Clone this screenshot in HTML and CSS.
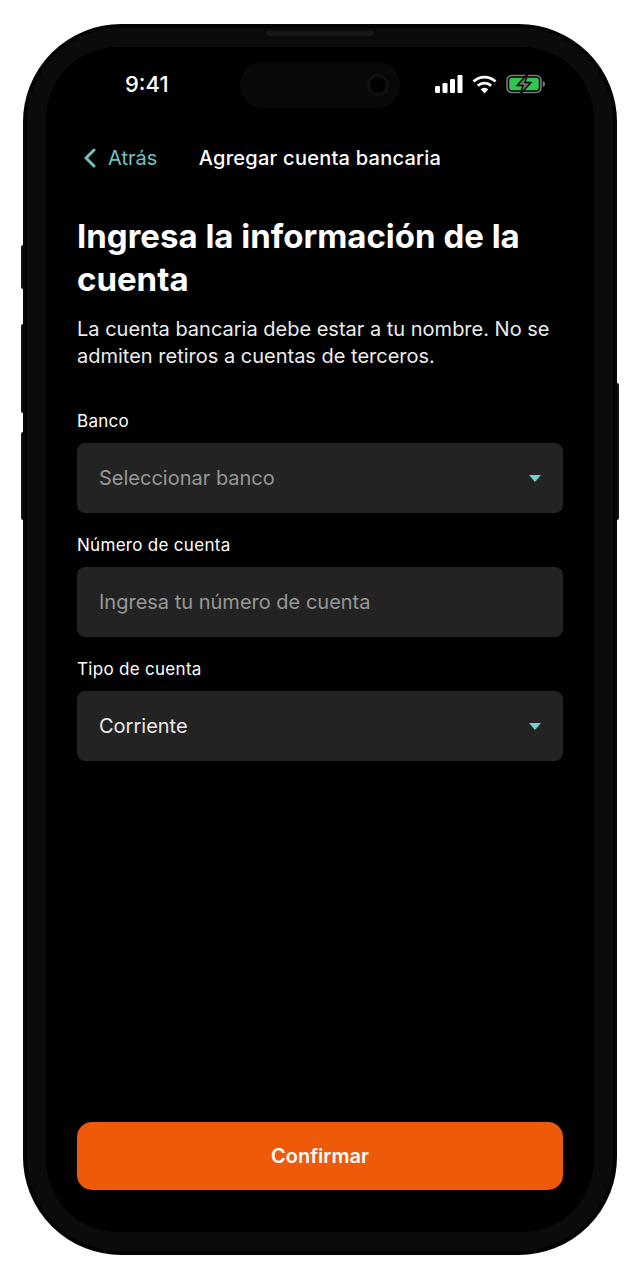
FILE: index.html
```html
<!DOCTYPE html>
<html lang="es">
<head>
    <meta charset="UTF-8">
    <meta name="viewport" content="width=device-width, initial-scale=1.0">
    <title>Agregar cuenta bancaria</title>
    <link rel="stylesheet" href="styles.css">
</head>
<body>
<div class="phone">
    <span class="side-btn btn-silent"></span>
    <span class="side-btn btn-up"></span>
    <span class="side-btn btn-down"></span>
    <span class="side-btn btn-power"></span>
    <span class="speaker"></span>

    <div class="screen">
        <div class="status-bar">
            <span class="time">9:41</span>
            <div class="island"><span class="camera"></span></div>
            <div class="status-icons">
                <svg width="28" height="18" viewBox="0 0 28 18">
                    <rect x="0" y="11" width="5" height="7" rx="1.2" fill="#fff"/>
                    <rect x="7.5" y="8" width="5" height="10" rx="1.2" fill="#fff"/>
                    <rect x="15" y="4" width="5" height="14" rx="1.2" fill="#fff"/>
                    <rect x="22.5" y="0" width="5" height="18" rx="1.2" fill="#fff"/>
                </svg>
                <svg width="25" height="19" viewBox="0 0 25 19">
                    <path d="M1.5 6.5a16 16 0 0 1 22 0" fill="none" stroke="#fff" stroke-width="2.8"/>
                    <path d="M5.8 10.8a10 10 0 0 1 13.4 0" fill="none" stroke="#fff" stroke-width="2.8"/>
                    <path d="M8.7 14.2 12.5 18.5l3.8-4.3a5.5 5.5 0 0 0-7.6 0z" fill="#fff"/>
                </svg>
                <svg width="40" height="20" viewBox="0 0 40 20">
                    <rect x="1" y="1.5" width="34" height="17" rx="5" fill="none" stroke="#7b7b7b" stroke-width="1.6"/>
                    <rect x="3.2" y="3.7" width="29.6" height="12.6" rx="3" fill="#30c750"/>
                    <path d="M36.8 7v6c1.4-.4 2.2-1.6 2.2-3s-.8-2.6-2.2-3z" fill="#7b7b7b"/>
                    <path d="M21.5 0 11 11.5h6L14.5 20 25 8.5h-6z" fill="#707070" stroke="#000" stroke-width="1.4"/>
                </svg>
            </div>
        </div>

        <div class="top-nav">
            <div class="back">
                <svg width="14" height="20" viewBox="0 0 14 20">
                    <path d="M11 2 3 10l8 8" fill="none" stroke="#6fc4c1" stroke-width="3" stroke-linecap="round" stroke-linejoin="round"/>
                </svg>
                <span>Atrás</span>
            </div>
            <span class="nav-title">Agregar cuenta bancaria</span>
        </div>

        <div class="content">
            <h1>Ingresa la información de la cuenta</h1>
            <p class="intro">La cuenta bancaria debe estar a tu nombre. No se admiten retiros a cuentas de terceros.</p>

            <div class="field">
                <label>Banco</label>
                <div class="input">
                    <span class="placeholder">Seleccionar banco</span>
                    <span class="caret"></span>
                </div>
            </div>
            <div class="field">
                <label>Número de cuenta</label>
                <div class="input">
                    <span class="placeholder">Ingresa tu número de cuenta</span>
                </div>
            </div>
            <div class="field">
                <label>Tipo de cuenta</label>
                <div class="input">
                    <span class="value">Corriente</span>
                    <span class="caret"></span>
                </div>
            </div>
        </div>

        <button class="confirm">Confirmar</button>
    </div>
</div>
</body>
</html>
```

FILE: styles.css
```css
* {
    box-sizing: border-box;
}
body {
    font-family: Inter, "Noto Sans", sans-serif;
    margin: 0;
    background-color: #ffffff;
    color: #ffffff;
}
.phone {
    position: relative;
    width: 594px;
    height: 1231px;
    margin: 24px 0 25px 23px;
    padding: 19px;
    background-color: #090b0c;
    border: 4px solid #020303;
    border-radius: 98px;
}
.side-btn {
    position: absolute;
    width: 2px;
    background-color: #151515;
}
.btn-silent {
    left: -6px;
    top: 217px;
    height: 44px;
    border-radius: 2px 0 0 2px;
}
.btn-up {
    left: -6px;
    top: 296px;
    height: 89px;
    border-radius: 2px 0 0 2px;
}
.btn-down {
    left: -6px;
    top: 404px;
    height: 88px;
    border-radius: 2px 0 0 2px;
}
.btn-power {
    right: -6px;
    top: 355px;
    height: 137px;
    border-radius: 0 2px 2px 0;
}
.speaker {
    position: absolute;
    top: 3px;
    left: 239px;
    width: 108px;
    height: 5px;
    background-color: #141617;
    border-radius: 0 0 4px 4px;
}
.screen {
    display: flex;
    flex-direction: column;
    height: 100%;
    padding: 0 31px;
    background-color: #000000;
    border-radius: 72px;
}
.status-bar {
    position: relative;
    display: flex;
    align-items: center;
    justify-content: space-between;
    height: 74px;
    padding: 0 17px 0 48px;
    flex: none;
}
.time {
    font-size: 22px;
    font-weight: 500;
}
.island {
    position: absolute;
    left: 163px;
    top: 15px;
    width: 160px;
    height: 46px;
    background-color: #070909;
    border-radius: 23px;
}
.camera {
    position: absolute;
    right: 11px;
    top: 12px;
    width: 22px;
    height: 22px;
    background-color: #000000;
    border: 3px solid #0e1011;
    border-radius: 50%;
}
.status-icons {
    display: flex;
    align-items: center;
    gap: 9px;
}
.top-nav {
    position: relative;
    display: flex;
    align-items: center;
    justify-content: center;
    height: 32px;
    margin-top: 21px;
    flex: none;
}
.back {
    position: absolute;
    left: 6px;
    top: 0;
    height: 32px;
    display: flex;
    align-items: center;
    gap: 11px;
    color: #6fc4c1;
    font-size: 20px;
}
.nav-title {
    font-size: 20px;
    font-weight: 500;
    letter-spacing: 0.25px;
}
.content {
    flex: 1;
}
h1 {
    font-size: 33px;
    font-weight: 700;
    line-height: 43px;
    margin: 41px 0 0;
}
.intro {
    font-size: 20px;
    line-height: 27px;
    margin: 15px 0 0;
    color: #ececec;
}
.field {
    margin-top: 21px;
}
.field:first-of-type {
    margin-top: 40px;
}
label {
    display: block;
    font-size: 17px;
    font-weight: 400;
    letter-spacing: 0.3px;
    line-height: 22px;
    margin-bottom: 11px;
}
.input {
    display: flex;
    align-items: center;
    justify-content: space-between;
    height: 70px;
    padding: 0 22px;
    font-size: 20px;
    background-color: #232323;
    border-radius: 8px;
}
.placeholder {
    color: #979797;
}
.value {
    color: #ececec;
}
.caret {
    width: 0;
    height: 0;
    border-left: 6px solid transparent;
    border-right: 6px solid transparent;
    border-top: 7px solid #6fd0cc;
}
.confirm {
    flex: none;
    width: 100%;
    height: 68px;
    margin-bottom: 42px;
    font-family: inherit;
    font-size: 20px;
    font-weight: 600;
    color: #ffffff;
    background-color: #ef5a0a;
    border: none;
    border-radius: 15px;
}
```
